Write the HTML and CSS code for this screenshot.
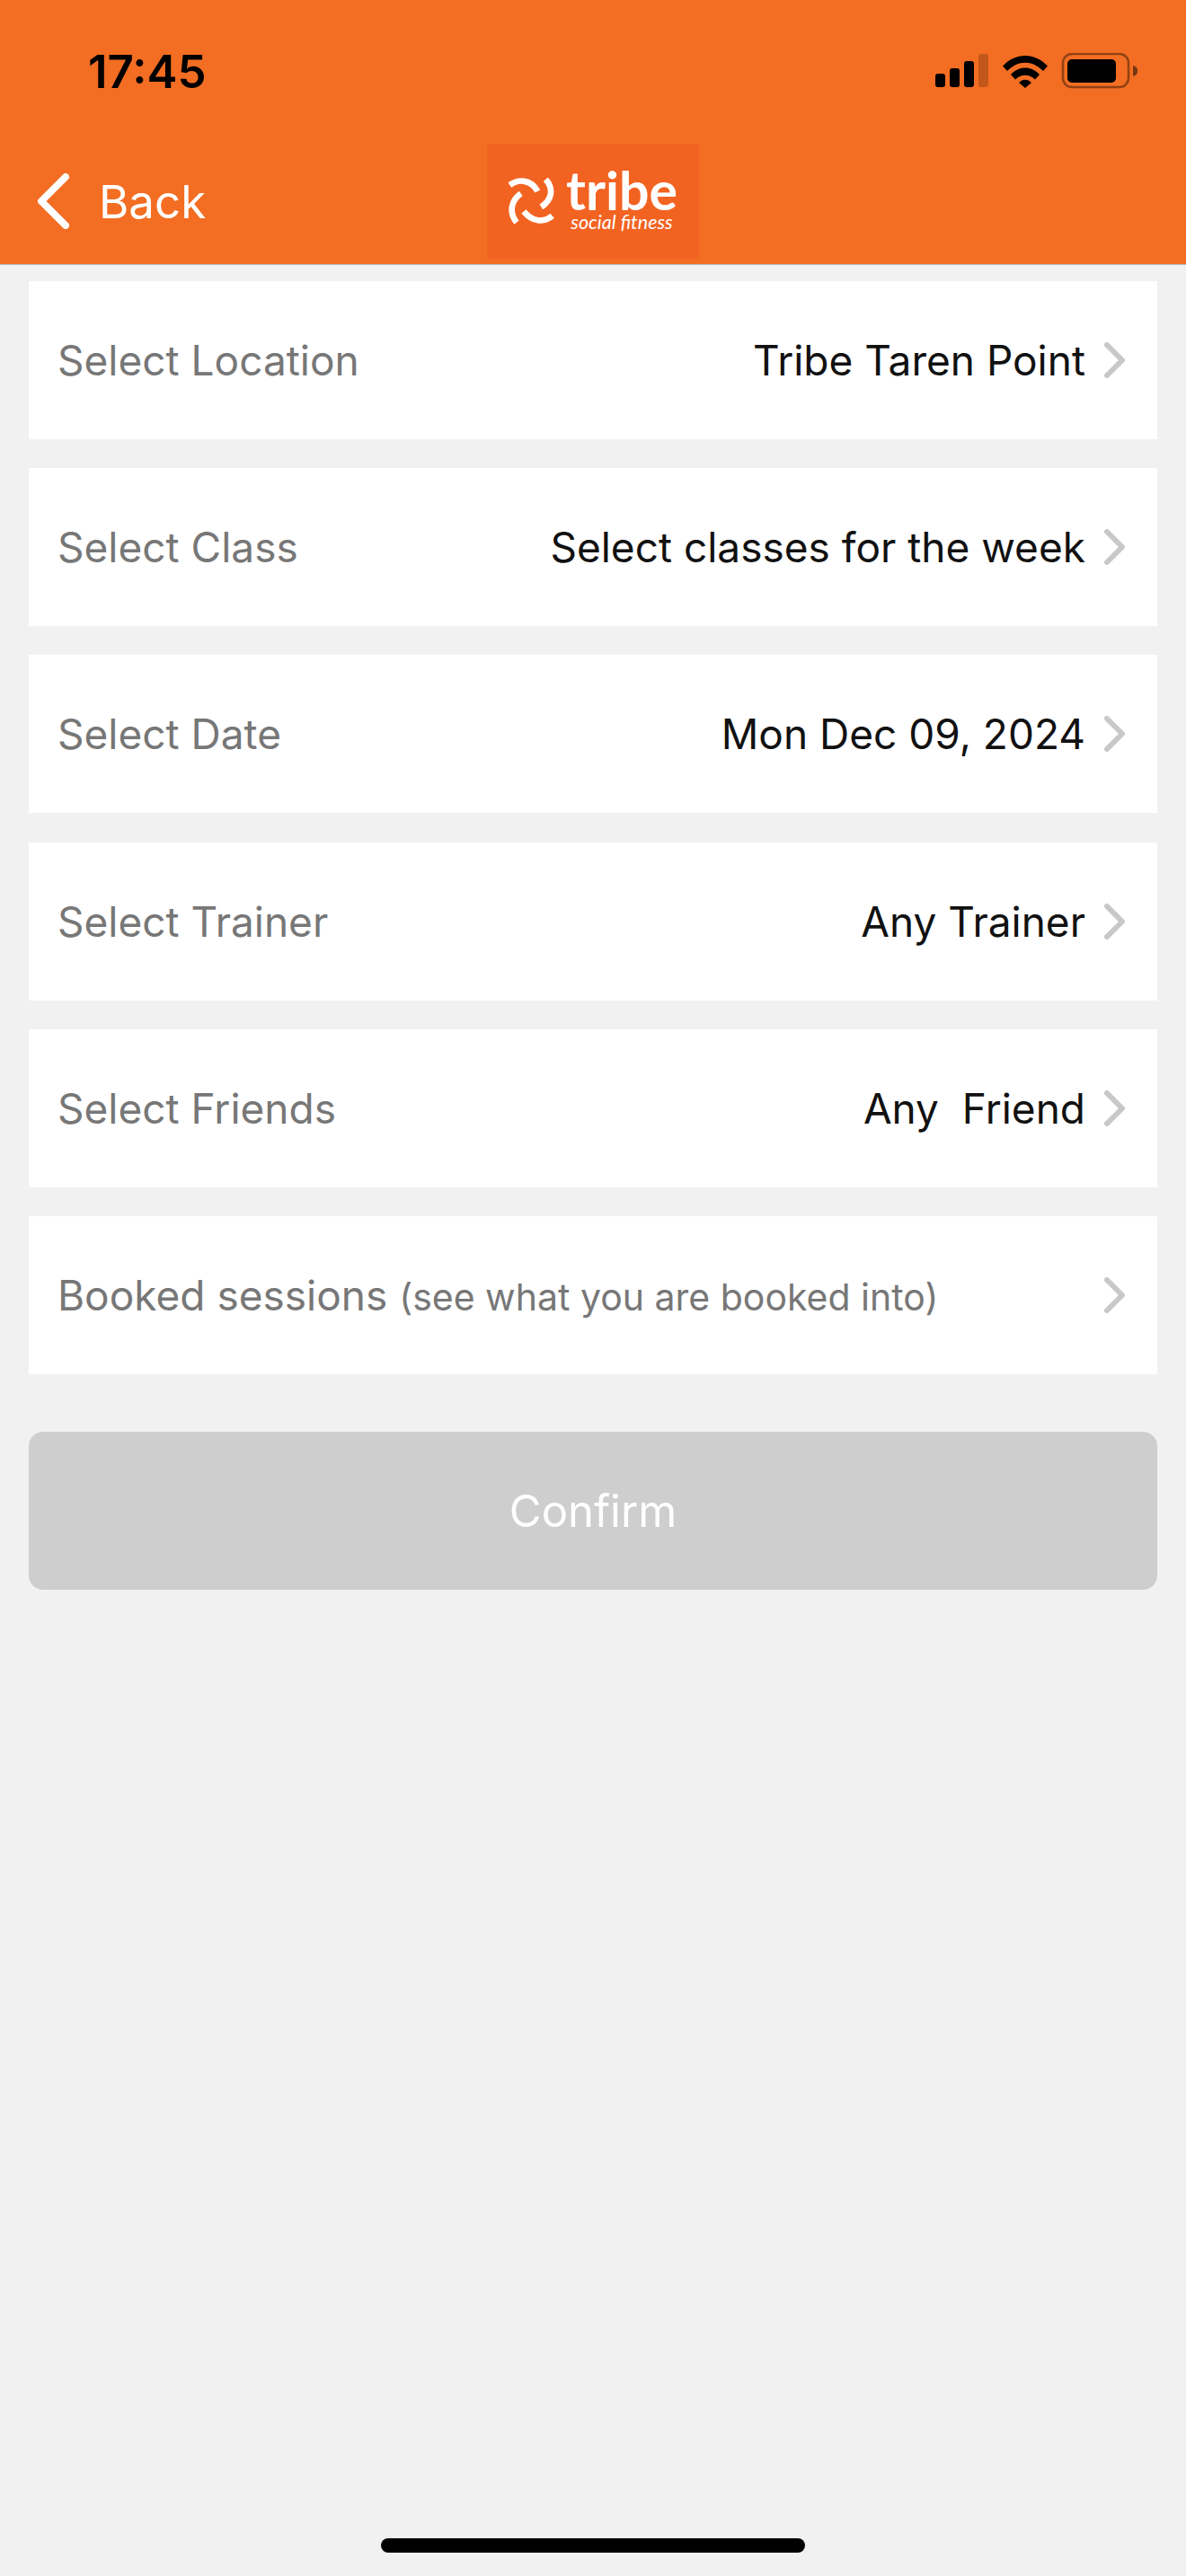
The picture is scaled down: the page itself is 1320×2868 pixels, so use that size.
FILE: index.html
```html
<!DOCTYPE html>
<html lang="en">
<head>
    <meta charset="UTF-8">
    <meta name="viewport" content="width=device-width, initial-scale=1.0">
    <title>Tribe - Book a session</title>
    <link rel="stylesheet" href="styles.css">
</head>
<body>
    <div class="screen">
        <header class="header">
            <div class="status-bar">
                <span class="time">17:45</span>
                <svg class="status-icons" width="226" height="40" viewBox="0 0 226 40">
                    <!-- signal -->
                    <rect x="0" y="23" width="11" height="15" rx="3"/>
                    <rect x="16" y="17" width="11" height="21" rx="3"/>
                    <rect x="32" y="9" width="11" height="29" rx="3"/>
                    <rect x="48" y="1" width="11" height="37" rx="3" fill-opacity="0.2"/>
                    <!-- wifi -->
                    <path d="M75 14.5 C89 -1, 111 -1, 125 14.5 L120 20 C108 7.5, 92 7.5, 80 20 Z"/>
                    <path d="M84 24 C93 14, 107 14, 116 24 L111 29.5 C105 23, 95 23, 89 29.5 Z"/>
                    <path d="M93 33 C97 28.5, 103 28.5, 107 33 L100 39 Z"/>
                    <!-- battery -->
                    <rect x="142" y="1" width="73" height="37" rx="10" fill="none" stroke="#000" stroke-opacity="0.4" stroke-width="2.5"/>
                    <rect x="147" y="7" width="54" height="26" rx="5"/>
                    <path d="M220 14 C224 15, 225 17, 225 20 C225 23, 224 25, 220 26 Z" fill-opacity="0.5"/>
                </svg>
            </div>
            <nav class="nav-bar">
                <a class="back">
                    <svg class="back-icon" width="36" height="62" viewBox="0 0 36 62">
                        <path d="M32 4 L5 31 L32 58"/>
                    </svg>
                    <span>Back</span>
                </a>
                <div class="logo">
                    <svg class="logo-mark" width="52" height="52" viewBox="0 0 156 156">
                        <path d="M4 24 C34 2, 76 6, 97 45"/>
                        <path d="M124 5 C150 34, 148 72, 109 97"/>
                        <path d="M146 127 C118 152, 78 146, 51 112"/>
                        <path d="M27 149 C2 118, 6 78, 41 52"/>
                    </svg>
                    <div class="logo-text">
                        <span class="logo-name">tribe</span>
                        <span class="logo-tag">social fitness</span>
                    </div>
                </div>
            </nav>
        </header>

        <main class="content">
            <div class="row">
                <span class="label">Select Location</span>
                <span class="value">Tribe Taren Point</span>
                <svg class="chevron" width="24" height="40" viewBox="0 0 24 40"><path d="M3 3 L20 20 L3 37"/></svg>
            </div>
            <div class="row">
                <span class="label">Select Class</span>
                <span class="value">Select classes for the week</span>
                <svg class="chevron" width="24" height="40" viewBox="0 0 24 40"><path d="M3 3 L20 20 L3 37"/></svg>
            </div>
            <div class="row">
                <span class="label">Select Date</span>
                <span class="value">Mon Dec 09, 2024</span>
                <svg class="chevron" width="24" height="40" viewBox="0 0 24 40"><path d="M3 3 L20 20 L3 37"/></svg>
            </div>
            <div class="row">
                <span class="label">Select Trainer</span>
                <span class="value">Any Trainer</span>
                <svg class="chevron" width="24" height="40" viewBox="0 0 24 40"><path d="M3 3 L20 20 L3 37"/></svg>
            </div>
            <div class="row">
                <span class="label">Select Friends</span>
                <span class="value">Any &nbsp;Friend</span>
                <svg class="chevron" width="24" height="40" viewBox="0 0 24 40"><path d="M3 3 L20 20 L3 37"/></svg>
            </div>
            <div class="row">
                <span class="label">Booked sessions <small class="hint">(see what you are booked into)</small></span>
                <svg class="chevron" width="24" height="40" viewBox="0 0 24 40"><path d="M3 3 L20 20 L3 37"/></svg>
            </div>
            <button class="confirm">Confirm</button>
        </main>

        <div class="home-bar"></div>
    </div>
</body>
</html>
```

FILE: styles.css
```css
* {
    box-sizing: border-box;
}

body {
    margin: 0;
    background-color: #f1f1f1;
    font-family: Inter, Roboto, "Liberation Sans", sans-serif;
}

.screen {
    display: flex;
    flex-direction: column;
    height: 2868px;
}

.header {
    height: 295px;
    background-color: #f36d22;
    border-bottom: 1px solid #b9b9b9;
}

.status-bar {
    display: flex;
    justify-content: space-between;
    align-items: flex-start;
    height: 160px;
    padding: 58px 53px 0 98px;
}

.time {
    font-size: 51px;
    font-weight: 600;
    line-height: 44px;
    color: #000;
}

.status-icons {
    margin-top: 1px;
}

.nav-bar {
    display: grid;
    grid-template-columns: 1fr auto 1fr;
    align-items: center;
    height: 128px;
}

.back {
    display: flex;
    align-items: center;
    gap: 33px;
    padding-left: 41px;
    font-size: 51px;
    color: #fff;
}

.back-icon path {
    fill: none;
    stroke: #fff;
    stroke-width: 8;
    stroke-linecap: round;
    stroke-linejoin: round;
}

.logo {
    display: flex;
    align-items: center;
    gap: 12px;
    width: 236px;
    height: 128px;
    padding-left: 24px;
    background-color: #f26322;
}

.logo-mark path {
    fill: none;
    stroke: #fff;
    stroke-width: 20;
}

.logo-text {
    display: flex;
    flex-direction: column;
    align-items: center;
    color: #fff;
}

.logo-name {
    font-family: Lato, sans-serif;
    font-size: 59px;
    font-weight: 700;
    line-height: 46px;
}

.logo-tag {
    font-family: Lato, sans-serif;
    font-size: 21.5px;
    font-style: italic;
    line-height: 24px;
}

.content {
    display: flex;
    flex-direction: column;
    gap: 32.2px;
    padding: 18px 32px 0;
}

.row {
    display: flex;
    align-items: center;
    height: 176px;
    padding: 0 35px 0 32px;
    background-color: #fff;
    font-size: 46px;
}

.label {
    flex: 1;
    color: #777;
}

.hint {
    font-size: 41px;
}

.value {
    color: #111;
}

.chevron {
    margin-left: 21px;
}

.chevron path {
    fill: none;
    stroke: #c8c8c8;
    stroke-width: 6;
    stroke-linecap: round;
    stroke-linejoin: round;
}

.confirm {
    height: 176px;
    margin-top: 32px;
    background-color: #cecece;
    border: none;
    border-radius: 16px;
    font-family: inherit;
    font-size: 49px;
    color: #fff;
}

.home-bar {
    width: 472px;
    height: 16px;
    margin: auto auto 26px;
    background-color: #000;
    border-radius: 8px;
}
```
